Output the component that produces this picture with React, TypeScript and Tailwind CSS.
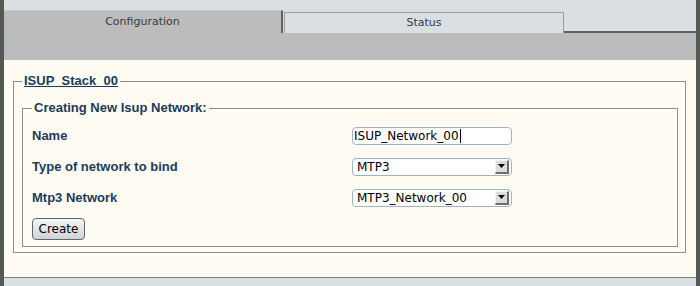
const labelCls = "text-[13px] font-bold text-[#1b3b5a] [font-family:'Liberation_Sans',Arial,sans-serif]";
const fieldFont = "[font-family:'DejaVu_Sans',sans-serif] text-[12px] text-black";

const SelectBox = ({ value }: { value: string }) => (
  <div className={`flex h-[18px] w-[160px] items-center justify-between rounded-[4px] border border-[#a3b2c3] bg-white pl-[4px] pr-[2px] ${fieldFont}`}>
    <span className="leading-none">{value}</span>
    <span className="flex h-[14px] w-[14px] items-center justify-center border-r-2 border-b-2 border-[#6c6c6c] bg-[#dcdcdc] border-t border-l border-t-[#f4f4f4] border-l-[#f4f4f4]">
      <svg width="7" height="4" viewBox="0 0 7 4">
        <path d="M0 0h7L3.5 4z" fill="#000" />
      </svg>
    </span>
  </div>
);

const Row = ({ label, children }: { label: string; children: React.ReactNode }) => (
  <div className="flex h-[31px] items-center">
    <div className={`w-[320px] ${labelCls}`}>{label}</div>
    {children}
  </div>
);

export default function App() {
  return (
    <div className="flex h-[286px] w-[700px] flex-col border-l-4 border-r-4 border-[#545954] bg-[#d9dfe2]">
      {/* tab strip */}
      <div className="flex h-[33px] items-end [font-family:'DejaVu_Sans',sans-serif] text-[11px] text-[#3a3a3a]">
        <div className="flex h-[23px] w-[279px] items-center justify-center border-t border-r-2 border-t-[#c9c9c9] border-r-[#5f625f] bg-[#bcbcbc]">
          Configuration
        </div>
        <div className="flex h-[21px] w-[280px] items-center justify-center border-t border-x border-[#9ba0a2] bg-[#d9dfe2] ml-[1px]">
          Status
        </div>
        <div className="flex-1 self-stretch border-b-2 border-[#5f625f]" />
      </div>
      <div className="h-[27px] bg-[#bbbcbd]" />

      {/* content */}
      <div className="h-[217px] bg-[#fefbf2] pt-[13px] pl-[9px] pr-[10px]">
        <fieldset className="border border-[#8c8c8c] pl-[8px] pr-[7px] pt-[11px] pb-[5px]">
          <legend className={`px-[2px] leading-4 underline ${labelCls}`}>ISUP_Stack_00</legend>
          <fieldset className="border border-[#8c8c8c] pl-[9px] pt-[4px] pb-[6px]">
            <legend className={`px-[2px] leading-4 ${labelCls}`}>Creating New Isup Network:</legend>
            <Row label="Name">
              <div className={`flex h-[18px] w-[160px] items-center rounded-[4px] border border-[#a3b2c3] bg-white pl-[1px] ${fieldFont}`}>
                <span className="leading-none">ISUP_Network_00</span>
                <span className="ml-[1px] h-[14px] w-px bg-black" />
              </div>
            </Row>
            <Row label="Type of network to bind">
              <SelectBox value="MTP3" />
            </Row>
            <Row label="Mtp3 Network">
              <SelectBox value="MTP3_Network_00" />
            </Row>
            <button className="mt-[5px] h-[22px] w-[53px] rounded-[4px] border border-[#56697a] bg-gradient-to-b from-[#f6f6f6] to-[#d2d2d2] [font-family:'DejaVu_Sans',sans-serif] text-[12px] text-black">
              Create
            </button>
          </fieldset>
        </fieldset>
      </div>

      <div className="flex-1 border-t border-[#7d807d] bg-[#d9dfe2]" />
    </div>
  );
}
